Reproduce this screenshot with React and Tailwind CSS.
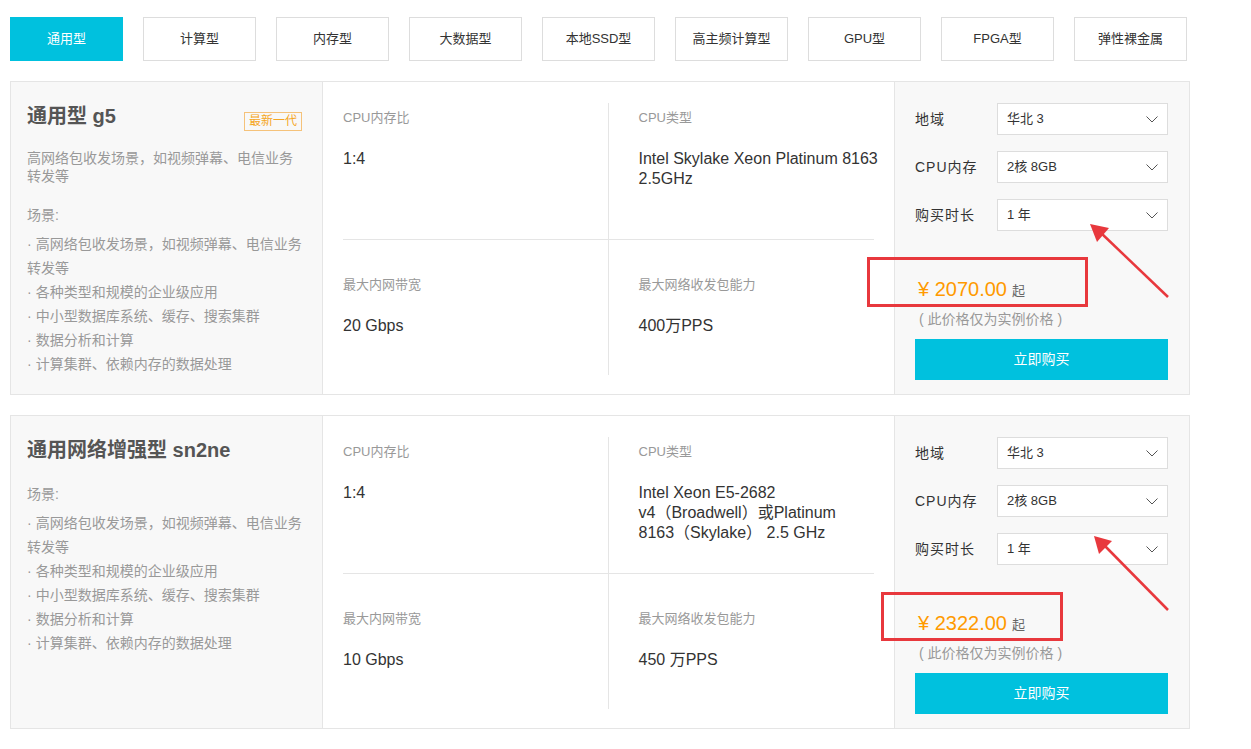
import React from "react";

const FONT = { fontFamily: '"Liberation Sans", "Noto Sans CJK SC", sans-serif' };

const tabs = ["通用型", "计算型", "内存型", "大数据型", "本地SSD型", "高主频计算型", "GPU型", "FPGA型", "弹性裸金属"];

const scenes = [
  ["高网络包收发场景，如视频弹幕、电信业务", "转发等"],
  ["各种类型和规模的企业级应用"],
  ["中小型数据库系统、缓存、搜索集群"],
  ["数据分析和计算"],
  ["计算集群、依赖内存的数据处理"],
];

function Chevron() {
  return (
    <svg width="12" height="7" viewBox="0 0 12 7" fill="none">
      <polyline points="0.5,0.5 6,6 11.5,0.5" stroke="#555" strokeWidth="1" />
    </svg>
  );
}

function SelectRow({ label, value }) {
  return (
    <div className="flex items-center h-[32px]">
      <div className="w-[82px] text-[14px] text-[#333] tracking-[1px]">{label}</div>
      <div className="w-[171px] h-[32px] bg-white border border-[#ddd] flex items-center justify-between pl-[9px] pr-[9px] text-[13px] text-[#333]">
        <span>{value}</span>
        <Chevron />
      </div>
    </div>
  );
}

function Cell({ label, lines, top, right }) {
  return (
    <div
      className={
        (top ? "h-[137px] border-b border-[#e5e5e5] pt-[5px] " : "h-[135px] pt-[35px] ") +
        (right ? "pl-[30px] " : "border-r border-[#e5e5e5] ")
      }
    >
      <div className="text-[13px] leading-[20px] text-[#999]">{label}</div>
      <div className="mt-[21px] text-[16px] leading-[20px] text-[#333]">
        {lines.map((l, i) => (
          <div key={i} className="whitespace-nowrap">{l}</div>
        ))}
      </div>
    </div>
  );
}

function Card({ title, badge, desc, mem, cpu, bw, pps, price }) {
  return (
    <div className="flex w-[1180px] h-[314px] border border-[#e5e5e5]">
      <div className="w-[312px] bg-[#f8f8f8] border-r border-[#e5e5e5] pl-[16px] pr-[20px] pt-[22px]">
        <div className="flex justify-between items-start">
          <div className="text-[20px] leading-[24px] font-bold text-[#555]">{title}</div>
          {badge && (
            <div className="mt-[8px] h-[19px] px-[4px] border border-[#f5c27a] text-[#f5a623] text-[12px] leading-[17px]">
              {badge}
            </div>
          )}
        </div>
        {desc && (
          <div className="mt-[18px] text-[14px] leading-[18px] text-[#999]">
            {desc.map((l, i) => (
              <div key={i} className="whitespace-nowrap">{l}</div>
            ))}
          </div>
        )}
        <div className={(desc ? "mt-[20px]" : "mt-[22px]") + " text-[14px] leading-[20px] text-[#999]"}>场景:</div>
        <div className="mt-[7px] text-[14px] leading-[24px] text-[#999]">
          {scenes.map((s, i) => (
            <div key={i} className="whitespace-nowrap">
              <span className="mr-[4px]">·</span>
              {s[0]}
              {s[1] && <div>{s[1]}</div>}
            </div>
          ))}
        </div>
      </div>
      <div className="w-[572px] bg-white border-r border-[#e5e5e5] px-[20px] pt-[21px]">
        <div className="grid grid-cols-2">
          <Cell top label="CPU内存比" lines={[mem]} />
          <Cell top right label="CPU类型" lines={cpu} />
          <Cell label="最大内网带宽" lines={[bw]} />
          <Cell right label="最大网络收发包能力" lines={[pps]} />
        </div>
      </div>
      <div className="w-[294px] bg-[#f8f8f8] pl-[20px] pr-[21px] pt-[21px]">
        <div className="flex flex-col gap-[16px]">
          <SelectRow label="地域" value="华北 3" />
          <SelectRow label="CPU内存" value="2核 8GB" />
          <SelectRow label="购买时长" value="1 年" />
        </div>
        <div className="mt-[44px] h-[28px] flex items-end pl-[3px]">
          <span className="text-[20px] leading-[28px] text-[#ff9a00]">¥ {price}</span>
          <span className="ml-[5px] text-[13px] leading-[24px] text-[#666]">起</span>
        </div>
        <div className="mt-[6px] pl-[4px] text-[14px] leading-[20px] text-[#999] whitespace-pre">( 此价格仅为实例价格 )</div>
        <button className="mt-[10px] w-[253px] h-[41px] bg-[#00c1de] text-white text-[14px]">立即购买</button>
      </div>
    </div>
  );
}

export default function App() {
  return (
    <div className="relative w-[1251px] h-[749px] bg-white overflow-hidden" style={FONT}>
      <div className="pl-[10px] pt-[17px]">
        <div className="flex gap-[20px]">
          {tabs.map((t, i) => (
            <div
              key={t}
              className={
                "w-[113px] h-[44px] flex items-center justify-center text-[13px] " +
                (i === 0 ? "bg-[#00c1de] text-white" : "bg-white border border-[#ddd] text-[#333]")
              }
            >
              {t}
            </div>
          ))}
        </div>
        <div className="mt-[20px] flex flex-col gap-[20px]">
          <Card
            title="通用型 g5"
            badge="最新一代"
            desc={["高网络包收发场景，如视频弹幕、电信业务", "转发等"]}
            mem="1:4"
            cpu={["Intel Skylake Xeon Platinum 8163", "2.5GHz"]}
            bw="20 Gbps"
            pps="400万PPS"
            price="2070.00"
          />
          <Card
            title="通用网络增强型 sn2ne"
            mem="1:4"
            cpu={["Intel Xeon E5-2682", "v4（Broadwell）或Platinum", "8163（Skylake） 2.5 GHz"]}
            bw="10 Gbps"
            pps="450 万PPS"
            price="2322.00"
          />
        </div>
      </div>
      <svg className="absolute left-0 top-0 pointer-events-none" width="1251" height="749">
        <rect x="868.5" y="258.5" width="218" height="47" fill="none" stroke="#e8383d" strokeWidth="3" />
        <line x1="1168" y1="297" x2="1100" y2="232" stroke="#e8383d" strokeWidth="2.5" />
        <polygon points="1090,224 1109,228 1097,242" fill="#e8383d" />
        <rect x="882.5" y="593.5" width="179" height="46" fill="none" stroke="#e8383d" strokeWidth="3" />
        <line x1="1168" y1="610" x2="1103" y2="544" stroke="#e8383d" strokeWidth="2.5" />
        <polygon points="1094,536 1112,541 1099,554" fill="#e8383d" />
      </svg>
    </div>
  );
}
